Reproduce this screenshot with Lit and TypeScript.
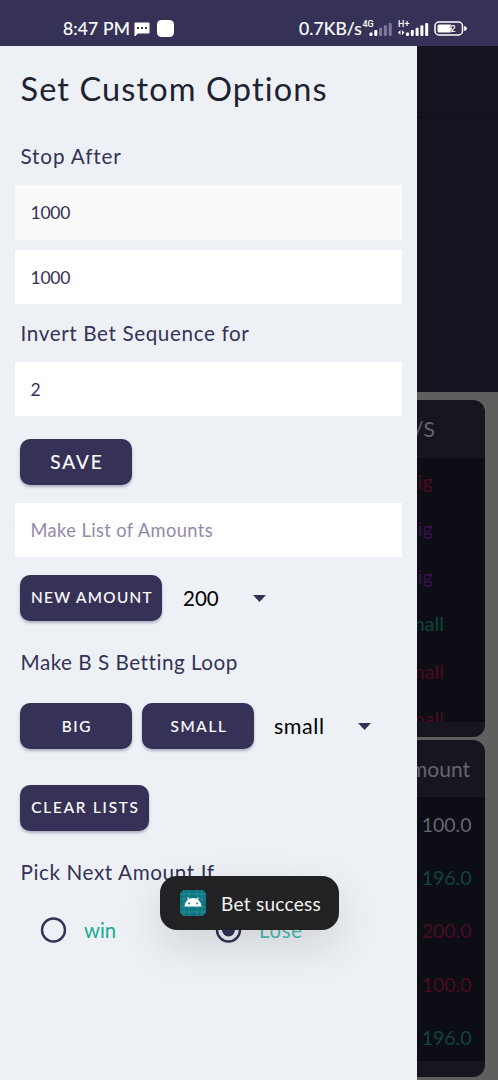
import { LitElement, html, css, svg } from "lit";
import { customElement } from "lit/decorators.js";

const bars = (lit: number) =>
  [0, 1, 2, 3, 4].map(
    (i) => svg`<rect x=${i * 4.8} y=${9.5 - i * 2.4} width="3" height=${3.5 + i * 2.4} rx="1" fill=${i < lit ? "#fff" : "#7d7a99"} />`
  );

@customElement("status-bar")
class StatusBar extends LitElement {
  static styles = css`
    :host { display: flex; height: 46px; box-sizing: border-box; padding: 12px 31px 0 63px; background: #353157; color: #fff; align-items: center; }
    .clock { font-size: 17.5px; width: 71px; white-space: nowrap; letter-spacing: 0.15px; -webkit-text-stroke: 0.2px #fff; margin-top: -1px; }
    .chat { width: 16px; height: 15px; margin-top: 1px; }
    .app { width: 16.5px; height: 17px; border-radius: 4.5px; background: #fff; margin-left: 7px; margin-top: -1px; }
    .speed { margin-left: auto; font-size: 17.5px; width: 63px; letter-spacing: 0.1px; white-space: nowrap; -webkit-text-stroke: 0.2px #fff; margin-top: -1px; margin-right: 2px; }
    .net { width: 70px; height: 20px; margin-top: -2px; overflow: visible; }
    .net text { font: 500 9px Roboto, sans-serif; fill: #fff; }
    .battery { width: 33px; height: 15px; margin-top: -1px; }
    .battery text { font: 500 9px Roboto, sans-serif; fill: #fff; }
  `;
  render() {
    return html`
      <span class="clock">8:47 PM</span>
      <svg class="chat" viewBox="0 0 16 15"><path d="M1 1h14v10H4l-3 3z" fill="#fff" stroke="#fff" stroke-linejoin="round" /><path d="M3 5h2v2H3zM7 5h2v2H7zM11 5h2v2h-2z" fill="#353157" /></svg>
      <span class="app"></span>
      <span class="speed">0.7KB/s</span>
      <svg class="net" viewBox="0 0 70 20">
        <text x="-1.500" y="8.500">4G</text>
        <g transform="translate(5.500 5)">${bars(2)}</g>
        <text x="34" y="8.500">H+</text>
        <g transform="translate(42 5)">${bars(5)}</g>
        <path d="M34 14.500l2.500-2.500v5zM40.500 14.500l-2.500-2.500v5z" fill="#fff" />
      </svg>
      <svg class="battery" viewBox="0 0 33 15">
        <rect x="1" y="1" width="27.500" height="13" rx="4" fill="none" stroke="#fff" stroke-width="1.500" />
        <rect x="3.500" y="3.500" width="14.500" height="8" rx="1.500" fill="#fff" />
        <path d="M30.500 5.500a2 2 0 0 1 0 4z" fill="#fff" stroke="#fff" stroke-width=".7" />
        <text x="16.500" y="11" stroke="#353157" stroke-width="1" paint-order="stroke">2</text>
      </svg>`;
  }
}

@customElement("history-tables")
class HistoryTables extends LitElement {
  static styles = css`
    :host { display: flex; flex-direction: column; height: 1034px; background: #5f5f5d; }
    .hero { height: 346px; flex: none; background: #151320; box-sizing: border-box; }
    .hero-bar { height: 72px; box-sizing: border-box; border-bottom: 1px solid #100e19; }
    .card { margin: 8px 13px 0 13px; height: 337px; flex: none; box-sizing: border-box; background: #171620; border-radius: 12px; overflow: hidden; font-size: 20px; }
    .card + .card { margin-top: 3px; height: 337px; }
    .head { height: 58px; line-height: 58px; color: #66656a; padding-right: 50px; text-align: right; font-size: 21px; }
    .rows { background: #0d0d16; height: 264px; overflow: hidden; text-align: right; }
    .size .row { height: 47.400px; line-height: 47px; padding-right: 41px; }
    .size .big { padding-right: 52px; }
    .amount .head { padding-right: 15px; height: 57px; line-height: 57px; }
    .amount .row { height: 53.200px; line-height: 55px; padding-right: 13.500px; font-size: 19.500px; }
    .red { color: #4a0c1f; } .purple { color: #3b134e; } .green { color: #0d4639; } .grey { color: #67666c; }
  `;
  render() {
    return html`
      <div class="hero"><div class="hero-bar"></div></div>
      <div class="card size">
        <div class="head">B/S</div>
        <div class="rows">
          <div class="row big red">Big</div>
          <div class="row big purple">Big</div>
          <div class="row big purple">Big</div>
          <div class="row green">Small</div>
          <div class="row red">Small</div>
          <div class="row red">Small</div>
        </div>
      </div>
      <div class="card amount">
        <div class="head">Amount</div>
        <div class="rows">
          <div class="row grey">100.0</div>
          <div class="row green">196.0</div>
          <div class="row red">200.0</div>
          <div class="row red">100.0</div>
          <div class="row green">196.0</div>
        </div>
      </div>`;
  }
}

@customElement("options-drawer")
class OptionsDrawer extends LitElement {
  static styles = css`
    :host { display: block; width: 417px; height: 1034px; background: #edf1f6; color: #353157; box-sizing: border-box; }
    h1 { margin: 0; padding: 15.500px 0 0 20.500px; height: 86px; box-sizing: border-box; font-weight: 400; font-size: 32.500px; line-height: 54px; letter-spacing: 1.120px; color: #1f2230; white-space: nowrap; }
    .label { padding-left: 20.500px; height: 50px; line-height: 49px; font-size: 20.700px; letter-spacing: 0.600px; white-space: nowrap; }
    .l1 { letter-spacing: 0.850px; }
    .field { margin: 0 15px; padding-left: 15.500px; height: 54px; line-height: 55px; background: #fff; font-size: 17.500px; letter-spacing: -0.250px; }
    .shaded { background: #fafafa; height: 55px; margin: 3px 15px 10px; }
    .l2 { height: 58px; line-height: 59px; }
    .hint { color: #9488aa; font-size: 18.300px; letter-spacing: 0.400px; margin-top: 18px; line-height: 55px; }
    .line { display: flex; padding-left: 20px; align-items: center; height: 46px; }
    .btn { height: 46px; box-sizing: border-box; border-radius: 10px; background: #353157; color: #fff; font-size: 15.300px; letter-spacing: 1.700px; display: flex; align-items: center; justify-content: center; white-space: nowrap; box-shadow: 0 2px 3px rgba(53, 49, 87, 0.35); width: 112px; padding-left: 2px; padding-bottom: 1px; -webkit-text-stroke: 0.180px #fff; }
    .save-line { margin-top: 23px; }
    .save { font-size: 19px; letter-spacing: 1.900px; padding-bottom: 1px; }
    .new-line { margin-top: 18px; }
    .new { width: 142px; letter-spacing: 1.350px; padding-bottom: 2px; }
    .pick { color: #000; font-size: 20.500px; margin-left: 21px; width: 70px; margin-top: -1px; }
    .caret { width: 13px; height: 7px; }
    .l3 { height: 82px; line-height: 83px; letter-spacing: 0.500px; }
    .small { margin-left: 10px; }
    .pick.word { width: 84px; margin-left: 20px; font-size: 21.500px; letter-spacing: 0.550px; margin-top: -1px; }
    .clear-line { margin-top: 36px; }
    .clear { width: 129px; letter-spacing: 1.800px; padding-bottom: 2px; }
    .l4 { height: 74px; line-height: 82px; }
    .radios { display: flex; height: 50px; align-items: center; padding-left: 40px; font-size: 20.300px; color: #17ac91; }
    .win, .lose { margin-top: -1px; }
    .radio { width: 27px; height: 27px; margin-right: 17px; }
    .win { width: 131px; }
    .lose { color: #4bbcb3; letter-spacing: 0.750px; }
  `;
  private caret() {
    return html`<svg class="caret" viewBox="0 0 13 7"><path d="M0 0h13L6.500 7z" fill="#353157" /></svg>`;
  }
  private radio(on: boolean) {
    return html`<svg class="radio" viewBox="0 0 27 27"><circle cx="13.500" cy="13" r="11.500" fill="none" stroke="#353157" stroke-width="2.400" />${on ? svg`<circle cx="13.500" cy="13" r="6.500" fill="#353157" />` : ""}</svg>`;
  }
  render() {
    return html`
      <h1>Set Custom Options</h1>
      <div class="label l1">Stop After</div>
      <div class="field shaded">1000</div>
      <div class="field">1000</div>
      <div class="label l2">Invert Bet Sequence for</div>
      <div class="field">2</div>
      <div class="line save-line"><div class="btn save">SAVE</div></div>
      <div class="field hint">Make List of Amounts</div>
      <div class="line new-line"><div class="btn new">NEW AMOUNT</div><span class="pick">200</span>${this.caret()}</div>
      <div class="label l3">Make B S Betting Loop</div>
      <div class="line"><div class="btn">BIG</div><div class="btn small">SMALL</div><span class="pick word">small</span>${this.caret()}</div>
      <div class="line clear-line"><div class="btn clear">CLEAR LISTS</div></div>
      <div class="label l4">Pick Next Amount If</div>
      <div class="radios">${this.radio(false)}<span class="win">win</span>${this.radio(true)}<span class="lose">Lose</span></div>`;
  }
}

@customElement("toast-message")
class ToastMessage extends LitElement {
  static styles = css`
    :host { display: flex; align-items: center; box-sizing: border-box; width: 179px; height: 54px; padding-left: 20px; border-radius: 17px; background: #222224; color: #f2f2f2; font-size: 19px; letter-spacing: 0.280px; white-space: nowrap; box-shadow: 0 16px 44px rgba(0, 0, 0, 0.13); }
    .icon { width: 26px; height: 26px; margin-right: 15.500px; }
  `;
  render() {
    return html`
      <svg class="icon" viewBox="0 0 26 26">
        <rect width="26" height="26" rx="5" fill="#0b7582" />
        <path d="M4 0v26M9 0v26M17 0v26M22 0v26M0 4h26M0 9h26M0 17h26M0 22h26" stroke="#3c9ba3" stroke-width=".6" />
        <path d="M4.500 16.500a8.500 8.500 0 0 1 17 0z" fill="#fff" />
        <path d="M7.500 7.500l2.300 3.500M18.500 7.500L16.200 11" stroke="#fff" stroke-width="1.200" />
        <circle cx="9" cy="13.500" r=".9" fill="#0b7582" /><circle cx="17" cy="13.500" r=".9" fill="#0b7582" />
      </svg>
      <span>Bet success</span>`;
  }
}

@customElement("app-root")
class AppRoot extends LitElement {
  static styles = css`
    :host { display: block; position: relative; width: 498px; height: 1080px; overflow: hidden; font-family: Lato, "Open Sans", sans-serif; }
    .drawer { position: absolute; left: 0; top: 46px; }
    .toast { position: absolute; left: 159.500px; top: 876px; }
  `;
  render() {
    return html`
      <status-bar></status-bar>
      <history-tables></history-tables>
      <options-drawer class="drawer"></options-drawer>
      <toast-message class="toast"></toast-message>`;
  }
}
